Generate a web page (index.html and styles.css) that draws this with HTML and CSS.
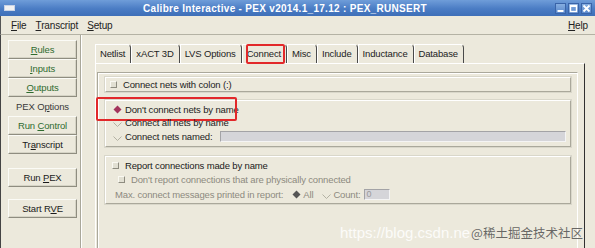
FILE: index.html
```html
<!DOCTYPE html>
<html>
<head>
<meta charset="utf-8">
<link rel="stylesheet" href="styles.css">
</head>
<body>
<div class="window">
  <div class="titlebar">
    <span class="ticon"></span>
    <span class="title">Calibre Interactive - PEX v2014.1_17.12 : PEX_RUNSERT</span>
    <div class="wbtns">
      <span class="wbtn"><svg width="9" height="9" viewBox="0 0 9 9"><rect x="1.5" y="6" width="6" height="2" fill="#fff"/></svg></span>
      <span class="wbtn"><svg width="9" height="9" viewBox="0 0 9 9"><rect x="1.5" y="1.5" width="6" height="6" fill="none" stroke="#fff" stroke-width="1.4"/><rect x="1" y="1" width="7" height="2" fill="#fff"/></svg></span>
      <span class="wbtn"><svg width="9" height="9" viewBox="0 0 9 9"><path d="M1.5 1.5 L7.5 7.5 M7.5 1.5 L1.5 7.5" stroke="#fff" stroke-width="1.8"/></svg></span>
    </div>
  </div>
  <div class="menubar">
    <span class="mi"><u>F</u>ile</span>
    <span class="mi"><u>T</u>ranscript</span>
    <span class="mi"><u>S</u>etup</span>
    <span class="spacer"></span>
    <span class="mi"><u>H</u>elp</span>
  </div>
  <div class="body">
    <div class="sidebar">
      <div class="nb green"><span><u>R</u>ules</span></div>
      <div class="nb green"><span><u>I</u>nputs</span></div>
      <div class="nb green"><span><u>O</u>utputs</span></div>
      <div class="nb flat"><span>PEX O<u>p</u>tions</span></div>
      <div class="nb green"><span>Run <u>C</u>ontrol</span></div>
      <div class="nb"><span>Tr<u>a</u>nscript</span></div>
      <div class="nb run"><span>Run <u>P</u>EX</span></div>
      <div class="nb rve"><span>Start R<u>V</u>E</span></div>
    </div>
    <div class="main">
      <div class="tabs">
        <span class="tab">Netlist</span>
        <span class="tab">xACT 3D</span>
        <span class="tab">LVS Options</span>
        <span class="tab active">Connect</span>
        <span class="tab">Misc</span>
        <span class="tab">Include</span>
        <span class="tab">Inductance</span>
        <span class="tab">Database</span>
      </div>
      <div class="page">
        <div class="inner">
          <div class="rowbox"><span class="cb"></span><span>Connect nets with colon (:)</span></div>
          <div class="group g2">
            <div class="opt r1 marked">
              <svg class="rd" width="9" height="9" viewBox="0 0 9 9"><polygon points="4.5,0.5 8.5,4.5 4.5,8.5 0.5,4.5" fill="#a3345c"/></svg>
              <span>Don't connect nets by name</span>
            </div>
            <div class="opt r2">
              <svg class="rd" width="9" height="9" viewBox="0 0 9 9"><polyline points="0.5,4.5 4.5,8.5 8.5,4.5" fill="none" stroke="#b3b1a3" stroke-width="1"/></svg>
              <span>Connect all nets by name</span>
            </div>
            <div class="opt r3">
              <svg class="rd" width="9" height="9" viewBox="0 0 9 9"><polyline points="0.5,4.5 4.5,8.5 8.5,4.5" fill="none" stroke="#b3b1a3" stroke-width="1"/></svg>
              <span>Connect nets named:</span>
              <span class="entry wide"></span>
            </div>
          </div>
          <div class="group g3">
            <div class="opt q1"><span class="cb"></span><span>Report connections made by name</span></div>
            <div class="opt q2 dis"><span class="cb"></span><span>Don't report connections that are physically connected</span></div>
            <div class="opt q3 dis">
              <span>Max. connect messages printed in report:</span>
              <svg class="rd all" width="9" height="9" viewBox="0 0 9 9"><polygon points="4.5,0.5 8.5,4.5 4.5,8.5 0.5,4.5" fill="#555"/></svg>
              <span>All</span>
              <svg class="rd cnt" width="9" height="9" viewBox="0 0 9 9"><polyline points="0.5,4.5 4.5,8.5 8.5,4.5" fill="none" stroke="#b3b1a3" stroke-width="1"/></svg>
              <span>Count:</span>
              <span class="entry small">0</span>
            </div>
          </div>
        </div>
      </div>
    </div>
  </div>
  <div class="watermark"><span class="wm-url">https://blog.csdn.ne</span><span class="wm-cn">@稀土掘金技术社区</span></div>
</div>
</body>
</html>
```

FILE: styles.css
```css
* { box-sizing: border-box; }
html, body { margin: 0; padding: 0; }
body {
  width: 595px; height: 248px; overflow: hidden;
  background: #ece9dc;
  font-family: "Liberation Sans", Arial, sans-serif;
  font-size: 9.5px; letter-spacing: -0.15px;
  color: #222;
}
.window { position: relative; width: 595px; height: 248px; display: flex; flex-direction: column; }

.titlebar {
  height: 16px; flex: none; display: flex; align-items: center;
  background: linear-gradient(#6f9dd9, #4a7cc4 55%, #3e6fb8);
  padding: 0 3px 0 4px;
}
.ticon { width: 11px; height: 6px; background: #f2f2f2; border: 1px solid #c9d3e6; }
.title { flex: 1; text-align: center; color: #fff; font-weight: bold; font-size: 10px; letter-spacing: 0.3px; }
.wbtns { display: flex; gap: 2px; }
.wbtn {
  width: 11px; height: 11px; display: flex; align-items: center; justify-content: center;
  background: linear-gradient(#86aee0, #5a88cc); border: 1px solid #3a64a8;
}

.menubar {
  height: 19px; flex: none; display: flex; align-items: center;
  padding: 0 7px 0 10px; border-bottom: 1px solid #b4b2a4;
  border-left: 1px solid #555;
  font-size: 10px; gap: 9px;
}
.spacer { flex: 1; }

.body { flex: 1; display: flex; border-left: 1px solid #444; min-height: 0; }

.sidebar {
  width: 80px; flex: none; border-right: 1px solid #a9a79a;
  box-shadow: 1px 0 0 #fff;
  padding: 5px 0 0 7px; display: flex; flex-direction: column;
}
.nb {
  width: 69px; height: 19px; display: flex; align-items: center; justify-content: center;
  border: 1px solid; border-color: #fbfbf6 #8f8d80 #8f8d80 #fbfbf6;
  box-shadow: inset -1px -1px 0 #d6d4c6;
  color: #1a1a1a; white-space: nowrap;
}
.nb.green { color: #2f6b2f; }
.nb.flat { border-color: transparent; box-shadow: none; color: #3a3a3a; }
.nb.run { margin-top: 14px; }
.nb.rve { margin-top: 12px; }

.main { flex: 1; display: flex; flex-direction: column; padding: 9px 10px 0 14px; }
.tabs { display: flex; height: 19px; flex: none; }
.tab {
  position: relative; height: 19px; line-height: 18px; padding: 0 5px 0 4px;
  border-top: 1px solid #fff; border-left: 1px solid #fff; border-right: 1px solid #4a4a4a;
  border-top-right-radius: 4px; color: #222; white-space: nowrap;
}
.tab.active::after {
  content: ""; position: absolute; left: 3px; right: 1px; top: -1px; bottom: -1px;
  border: 2px solid #e2282a; border-radius: 2px;
}

.page {
  flex: 1; border-top: 1px solid #fff; border-left: 1px solid #fff; border-right: 1px solid #303030;
  padding: 8px 6px 0 1px; display: flex; flex-direction: column;
}
.inner {
  flex: 1; border-top: 1px solid #aaa89b; border-left: 1px solid #aaa89b; border-right: 1px solid #fff;
  box-shadow: inset 1px 1px 0 #fff;
  padding: 4px 6px 0 7px;
}

.rowbox {
  height: 15px; display: flex; align-items: center; padding-left: 4px;
  border: 1px solid; border-color: #fff #aaa89b #aaa89b #fff;
  box-shadow: 0 0 0 1px #d9d7ca;
}
.cb {
  width: 7px; height: 7px; margin-right: 6px; flex: none;
  border: 1px solid; border-color: #faf9f2 #8e8c80 #8e8c80 #faf9f2; background: #e2e0d3;
}
.group {
  border: 1px solid; border-color: #fff #aaa89b #aaa89b #fff;
  box-shadow: 0 0 0 1px #d9d7ca;
}
.g2 { margin-top: 8px; height: 47px; padding: 1px 4px 0 7px; }
.g3 { margin-top: 9px; height: 48px; padding: 1px 4px 0 6px; }

.opt { position: relative; display: flex; align-items: center; white-space: nowrap; }
.rd { flex: none; margin-right: 3px; }
.r1 { height: 14px; }
.r2 { height: 13px; }
.r3 { height: 15px; }
.marked::after {
  content: ""; position: absolute; left: -17px; top: -5px; width: 137px; height: 20px;
  border: 2px solid #e2282a; border-radius: 2px;
}
.entry {
  height: 11px; background: #d5d5d9;
  border: 1px solid; border-color: #a3a3a6 #f4f4f4 #f4f4f4 #a3a3a6;
}
.entry.wide { flex: 1; margin-left: 8px; }
.entry.small { width: 26px; margin-left: 4px; font-size: 9px; line-height: 9px; padding-left: 1px; color: #9a9a9a; }

.q1 { height: 13px; margin-top: 1px; color: #1a1a1a; }
.q2 { height: 14px; padding-left: 6px; }
.q3 { height: 16px; padding-left: 3px; }
.dis { color: #8c8a7f; }
.rd.all { margin-left: 9px; margin-right: 2px; }
.rd.cnt { margin-left: 9px; margin-right: 2px; }

.watermark {
  position: absolute; left: 340px; top: 223px; display: flex; align-items: baseline;
  white-space: nowrap; letter-spacing: 0;
}
.wm-url { font-family: "Liberation Sans", Arial, sans-serif; font-size: 15px; color: rgba(255,255,255,0.85); }
.wm-cn { font-family: "Noto Sans CJK SC", sans-serif; font-size: 12.5px; color: rgba(80,80,80,0.85); margin-left: 1px; }
```
